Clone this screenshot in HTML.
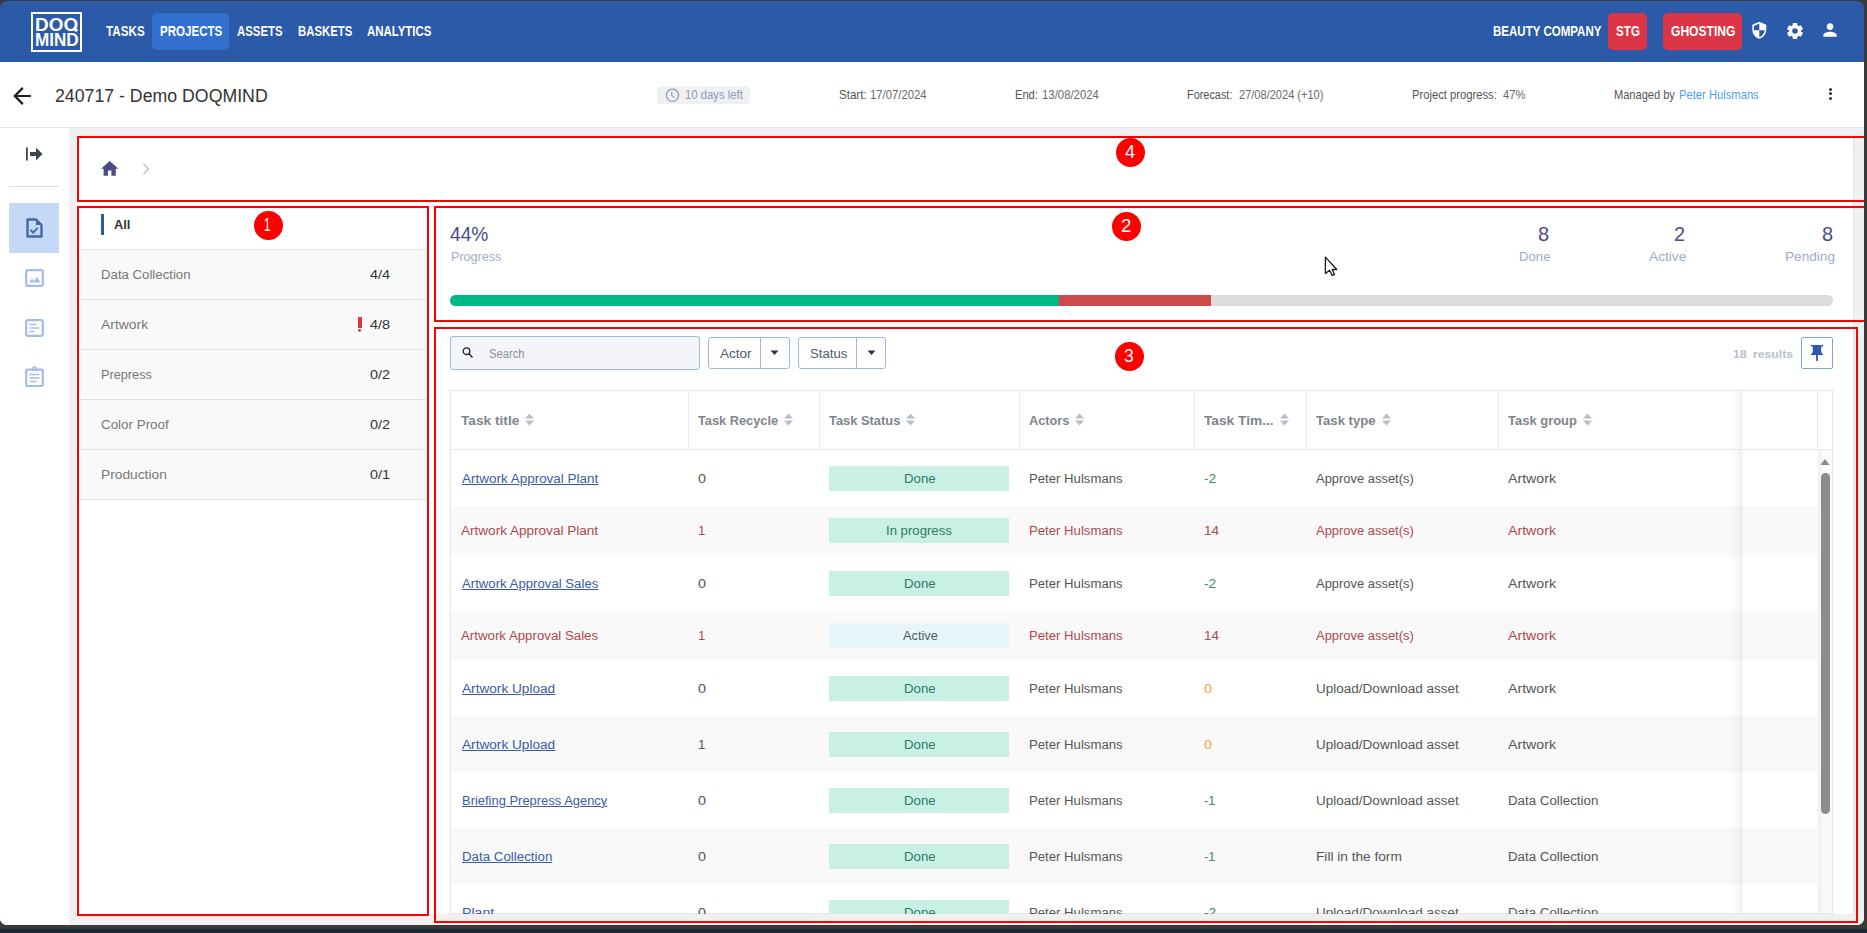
<!DOCTYPE html><html><head><meta charset='utf-8'><style>html,body{margin:0;padding:0;}
body{width:1867px;height:933px;background:#3a3a3a;position:relative;overflow:hidden;font-family:"Liberation Sans",sans-serif;}
#navy{position:absolute;left:0;top:929px;width:1867px;height:4px;background:#1b2a38;}
#win{position:absolute;left:0;top:1px;width:1864px;height:924px;border-radius:7px;overflow:hidden;}
#c{position:absolute;left:0;top:-1px;width:1864px;height:925px;}
.tx{position:absolute;white-space:nowrap;transform-origin:0 0;}
.bl{display:inline-block;width:0;height:0;vertical-align:baseline}#t0{transform:scaleX(1.0014)}#t1{transform:scaleX(0.9816)}#t2{transform:scaleX(0.8283)}#t3{transform:scaleX(0.8189)}#t4{transform:scaleX(0.8088)}#t5{transform:scaleX(0.8048)}#t6{transform:scaleX(0.8116)}#t7{transform:scaleX(0.8018)}#t8{transform:scaleX(0.8098)}#t9{transform:scaleX(0.8405)}#t10{transform:scaleX(0.9379)}#t11{transform:scaleX(0.9160)}#t12{transform:scaleX(0.9468)}#t13{transform:scaleX(0.9270)}#t14{transform:scaleX(0.9128)}#t15{transform:scaleX(0.9319)}#t16{transform:scaleX(0.8928)}#t17{transform:scaleX(0.9049)}#t18{transform:scaleX(0.9195)}#t19{transform:scaleX(0.9257)}#t20{transform:scaleX(0.9055)}#t21{transform:scaleX(0.9183)}#t22{transform:scaleX(0.9520)}#t23{transform:scaleX(0.9987)}#t24{transform:scaleX(1.0942)}#t25{transform:scaleX(1.0516)}#t26{transform:scaleX(1.0942)}#t27{transform:scaleX(0.9625)}#t28{transform:scaleX(1.0942)}#t29{transform:scaleX(1.0129)}#t30{transform:scaleX(1.0942)}#t31{transform:scaleX(1.0414)}#t32{transform:scaleX(1.0942)}#t33{transform:scaleX(0.9547)}#t34{transform:scaleX(0.9414)}#t35{transform:scaleX(0.9955)}#t36{transform:scaleX(0.9875)}#t37{transform:scaleX(0.9955)}#t38{transform:scaleX(1.0260)}#t39{transform:scaleX(0.9955)}#t40{transform:scaleX(1.0205)}#t41{transform:scaleX(0.8950)}#t42{transform:scaleX(1.0353)}#t43{transform:scaleX(1.0062)}#t44{transform:scaleX(1.0561)}#t45{transform:scaleX(1.0508)}#t46{transform:scaleX(1.0132)}#t47{transform:scaleX(0.9466)}#t48{transform:scaleX(0.9529)}#t49{transform:scaleX(0.9425)}#t50{transform:scaleX(1.0137)}#t51{transform:scaleX(0.9722)}#t52{transform:scaleX(0.9597)}#t53{transform:scaleX(1.0303)}#t54{transform:scaleX(1.0998)}#t55{transform:scaleX(1.0142)}#t56{transform:scaleX(1.0060)}#t57{transform:scaleX(1.0573)}#t58{transform:scaleX(0.9894)}#t59{transform:scaleX(1.0830)}#t60{transform:scaleX(1.0364)}#t61{transform:scaleX(1.0037)}#t62{transform:scaleX(1.0057)}#t63{transform:scaleX(1.0060)}#t64{transform:scaleX(1.0317)}#t65{transform:scaleX(0.9894)}#t66{transform:scaleX(1.0830)}#t67{transform:scaleX(1.0082)}#t68{transform:scaleX(1.0998)}#t69{transform:scaleX(1.0142)}#t70{transform:scaleX(1.0060)}#t71{transform:scaleX(1.0573)}#t72{transform:scaleX(0.9894)}#t73{transform:scaleX(1.0830)}#t74{transform:scaleX(1.0141)}#t75{transform:scaleX(1.0037)}#t76{transform:scaleX(0.9771)}#t77{transform:scaleX(1.0060)}#t78{transform:scaleX(1.0317)}#t79{transform:scaleX(0.9894)}#t80{transform:scaleX(1.0830)}#t81{transform:scaleX(1.0425)}#t82{transform:scaleX(1.0998)}#t83{transform:scaleX(1.0142)}#t84{transform:scaleX(1.0060)}#t85{transform:scaleX(1.0998)}#t86{transform:scaleX(1.0338)}#t87{transform:scaleX(1.0830)}#t88{transform:scaleX(1.0425)}#t89{transform:scaleX(1.0037)}#t90{transform:scaleX(1.0142)}#t91{transform:scaleX(1.0060)}#t92{transform:scaleX(1.0998)}#t93{transform:scaleX(1.0338)}#t94{transform:scaleX(1.0830)}#t95{transform:scaleX(0.9895)}#t96{transform:scaleX(1.0998)}#t97{transform:scaleX(1.0142)}#t98{transform:scaleX(1.0060)}#t99{transform:scaleX(0.9714)}#t100{transform:scaleX(1.0338)}#t101{transform:scaleX(1.0183)}#t102{transform:scaleX(1.0183)}#t103{transform:scaleX(1.0998)}#t104{transform:scaleX(1.0142)}#t105{transform:scaleX(1.0060)}#t106{transform:scaleX(0.9714)}#t107{transform:scaleX(1.0448)}#t108{transform:scaleX(1.0183)}#t109{transform:scaleX(1.0837)}#t110{transform:scaleX(1.0998)}#t111{transform:scaleX(1.0142)}#t112{transform:scaleX(1.0060)}#t113{transform:scaleX(1.0573)}#t114{transform:scaleX(1.0338)}#t115{transform:scaleX(1.0183)}#t116{transform:scaleX(0.6641)}#t117{transform:scaleX(1.0661)}#t118{transform:scaleX(1.0042)}#t119{transform:scaleX(1.0455)}</style></head><body><div id='navy'></div><div id='win'><div id='c'><div style="position:absolute;left:0px;top:120px;width:1864px;height:805px;background:#f0f0f0;"></div>
<div style="position:absolute;left:0px;top:0px;width:1864px;height:62px;background:#2b5aa8;"></div>
<div style="position:absolute;left:31px;top:12px;width:51px;height:40px;border:2.3px solid #fff;box-sizing:border-box;"></div>
<div id="t0" class="tx" style="left:34.77px;top:16.11px;font-size:18.90px;line-height:18.90px;color:#fff;font-weight:700;">DOO</div>
<div style="position:absolute;left:72.5px;top:27.5px;width:4.5px;height:2.6px;background:#fff;transform:rotate(40deg);"></div>
<div id="t1" class="tx" style="left:34.85px;top:32.10px;font-size:17.44px;line-height:17.44px;color:#fff;font-weight:700;">MIND</div>
<div style="position:absolute;left:152px;top:13px;width:77px;height:37px;background:#336fce;border-radius:5px;"></div>
<div id="t2" class="tx" style="left:106.45px;top:24.11px;font-size:14.10px;line-height:14.10px;color:#fff;font-weight:700;">TASKS</div>
<div id="t3" class="tx" style="left:159.95px;top:24.11px;font-size:14.10px;line-height:14.10px;color:#fff;font-weight:700;">PROJECTS</div>
<div id="t4" class="tx" style="left:237.05px;top:24.11px;font-size:14.10px;line-height:14.10px;color:#fff;font-weight:700;">ASSETS</div>
<div id="t5" class="tx" style="left:297.95px;top:24.11px;font-size:14.10px;line-height:14.10px;color:#fff;font-weight:700;">BASKETS</div>
<div id="t6" class="tx" style="left:366.75px;top:24.11px;font-size:14.10px;line-height:14.10px;color:#fff;font-weight:700;">ANALYTICS</div>
<div id="t7" class="tx" style="left:1492.74px;top:24.31px;font-size:14.39px;line-height:14.39px;color:#fff;font-weight:700;">BEAUTY COMPANY</div>
<div style="position:absolute;left:1608px;top:13px;width:39px;height:37px;background:#dc3545;border-radius:5px;"></div>
<div id="t8" class="tx" style="left:1615.54px;top:24.31px;font-size:14.39px;line-height:14.39px;color:#fff;font-weight:700;">STG</div>
<div style="position:absolute;left:1663px;top:13px;width:79px;height:37px;background:#dc3545;border-radius:5px;"></div>
<div id="t9" class="tx" style="left:1670.64px;top:24.31px;font-size:14.39px;line-height:14.39px;color:#fff;font-weight:700;">GHOSTING</div>
<svg style="position:absolute;left:1750.2px;top:21.2px;" width="18.6" height="18.6" viewBox="0 0 24 24"><path fill="#fff" d="M12 1L3 5v6c0 5.55 3.84 10.74 9 12 5.16-1.26 9-6.45 9-12V5l-9-4zm0 10.99h7c-.53 4.12-3.28 7.79-7 8.94V12H5V6.3l7-3.11v8.8z"/></svg>
<svg style="position:absolute;left:1787px;top:22.5px;" width="16" height="16" viewBox="-8 -8 16 16"><g fill="#fff"><rect x="-2.3" y="-8" width="4.6" height="4" rx="0.8" transform="rotate(0)"/><rect x="-2.3" y="-8" width="4.6" height="4" rx="0.8" transform="rotate(60)"/><rect x="-2.3" y="-8" width="4.6" height="4" rx="0.8" transform="rotate(120)"/><rect x="-2.3" y="-8" width="4.6" height="4" rx="0.8" transform="rotate(180)"/><rect x="-2.3" y="-8" width="4.6" height="4" rx="0.8" transform="rotate(240)"/><rect x="-2.3" y="-8" width="4.6" height="4" rx="0.8" transform="rotate(300)"/><circle r="6.2"/></g><circle r="2.8" fill="#2b5aa8"/></svg>
<svg style="position:absolute;left:1820.3px;top:20.4px;" width="20.1" height="20.1" viewBox="0 0 24 24"><path fill="#fff" d="M12 12c2.21 0 4-1.79 4-4s-1.79-4-4-4-4 1.79-4 4 1.79 4 4 4zm0 2c-2.67 0-8 1.34-8 4v2h16v-2c0-2.66-5.33-4-8-4z"/></svg>
<div style="position:absolute;left:0px;top:62px;width:1864px;height:65px;background:#fff;"></div>
<div style="position:absolute;left:0px;top:127px;width:1864px;height:1px;background:#e3e3e3;"></div>
<svg style="position:absolute;left:12px;top:84px;" width="20" height="24" viewBox="3 2 18 20"><path fill="#222" d="M20 11H7.83l5.59-5.59L12 4l-8 8 8 8 1.41-1.41L7.83 13H20v-2z"/></svg>
<div id="t10" class="tx" style="left:54.87px;top:87.00px;font-size:18.90px;line-height:18.90px;color:#333;font-weight:400;">240717 - Demo DOQMIND</div>
<div style="position:absolute;left:657px;top:86px;width:93px;height:18px;background:#f1f1f3;border-radius:4px;"></div>
<svg style="position:absolute;left:665px;top:87.5px;" width="15" height="15" viewBox="0 0 15 15"><circle cx="7.5" cy="7.3" r="6.1" fill="none" stroke="#8d9bb3" stroke-width="1.3"/><path d="M6.7 3.8V7.5L9.4 9.6" fill="none" stroke="#8d9bb3" stroke-width="1.2"/></svg>
<div id="t11" class="tx" style="left:684.86px;top:89.01px;font-size:12.35px;line-height:12.35px;color:#8f9bb3;font-weight:400;">10 days left</div>
<div id="t12" class="tx" style="left:838.67px;top:89.01px;font-size:12.21px;line-height:12.21px;color:#555;font-weight:400;">Start:</div>
<div id="t13" class="tx" style="left:870.27px;top:89.01px;font-size:12.21px;line-height:12.21px;color:#6a6a6a;font-weight:400;">17/07/2024</div>
<div id="t14" class="tx" style="left:1015.27px;top:89.01px;font-size:12.21px;line-height:12.21px;color:#555;font-weight:400;">End:</div>
<div id="t15" class="tx" style="left:1041.87px;top:89.01px;font-size:12.21px;line-height:12.21px;color:#6a6a6a;font-weight:400;">13/08/2024</div>
<div id="t16" class="tx" style="left:1187.47px;top:89.01px;font-size:12.21px;line-height:12.21px;color:#555;font-weight:400;">Forecast:</div>
<div id="t17" class="tx" style="left:1238.87px;top:89.01px;font-size:12.21px;line-height:12.21px;color:#6a6a6a;font-weight:400;">27/08/2024 (+10)</div>
<div id="t18" class="tx" style="left:1412.27px;top:89.01px;font-size:12.21px;line-height:12.21px;color:#555;font-weight:400;">Project progress:</div>
<div id="t19" class="tx" style="left:1503.27px;top:89.01px;font-size:12.21px;line-height:12.21px;color:#6a6a6a;font-weight:400;">47%</div>
<div id="t20" class="tx" style="left:1614.27px;top:89.01px;font-size:12.21px;line-height:12.21px;color:#555;font-weight:400;">Managed by</div>
<div id="t21" class="tx" style="left:1679.37px;top:89.01px;font-size:12.21px;line-height:12.21px;color:#4aa0f5;font-weight:400;">Peter Hulsmans</div>
<div style="position:absolute;left:1828.6px;top:87.9px;width:3px;height:3px;background:#333;border-radius:50%;"></div>
<div style="position:absolute;left:1828.6px;top:92.4px;width:3px;height:3px;background:#333;border-radius:50%;"></div>
<div style="position:absolute;left:1828.6px;top:96.9px;width:3px;height:3px;background:#333;border-radius:50%;"></div>
<div style="position:absolute;left:0px;top:128px;width:69px;height:797px;background:#fff;"></div>
<svg style="position:absolute;left:25px;top:146px;" width="19" height="16" viewBox="0 0 19 16"><rect x="1" y="1.5" width="1.8" height="13" fill="#3d4654"/><path d="M5 6h6V1.5L17.5 8L11 14.5V10H5z" fill="#3d4654"/></svg>
<div style="position:absolute;left:9px;top:186px;width:50px;height:1px;background:#dedede;"></div>
<div style="position:absolute;left:9px;top:203px;width:50px;height:50px;background:#c5d9f4;"></div>
<svg style="position:absolute;left:25px;top:217px;" width="19" height="22" viewBox="0 0 19 22"><path d="M2.5 2.5h8.5l5.5 5.5v11.5h-14z" fill="none" stroke="#4767a6" stroke-width="2.4" stroke-linejoin="round"/><path d="M11 2.5v5.5h5.5z" fill="#4767a6"/><path d="M5.5 13l2.6 2.6 4.6-4.8" fill="none" stroke="#4767a6" stroke-width="1.8"/></svg>
<svg style="position:absolute;left:24px;top:268px;" width="21" height="20" viewBox="0 0 21 20"><rect x="2.2" y="2.2" width="16.6" height="15.6" rx="1.2" fill="none" stroke="#a5bce8" stroke-width="2.2"/><path d="M5 14.5l3-4 2 2.5 3-4 3.5 5.5z" fill="#a5bce8"/></svg>
<svg style="position:absolute;left:24px;top:318px;" width="21" height="20" viewBox="0 0 21 20"><rect x="2.2" y="2.2" width="16.6" height="15.6" rx="1.2" fill="none" stroke="#a5bce8" stroke-width="2.2"/><path d="M5.5 6.5h7M5.5 10h10M5.5 13.5h5" stroke="#a5bce8" stroke-width="1.6"/></svg>
<svg style="position:absolute;left:24px;top:366px;" width="21" height="22" viewBox="0 0 21 22"><rect x="2.2" y="3.6" width="16.6" height="16.4" rx="1.2" fill="none" stroke="#a5bce8" stroke-width="2.2"/><circle cx="10.5" cy="2.8" r="1.8" fill="none" stroke="#a5bce8" stroke-width="1.4"/><path d="M5.5 8.5h10M5.5 12h10M5.5 15.5h7" stroke="#a5bce8" stroke-width="1.6"/></svg>
<div style="position:absolute;left:76px;top:136px;width:1777px;height:778px;background:#fff;"></div>
<div style="position:absolute;left:1853px;top:136px;width:1px;height:778px;background:#dfe5ee;"></div>
<svg style="position:absolute;left:101.3px;top:161.4px;" width="17.4" height="14.8" viewBox="2 3 20 17"><path fill="#4b4b8c" d="M10 20v-6h4v6h5v-8h3L12 3 2 12h3v8z"/></svg>
<svg style="position:absolute;left:142px;top:163px;" width="9" height="12" viewBox="0 0 9 12"><path d="M1.5 1l5 5-5 5" fill="none" stroke="#c2c2c2" stroke-width="1.5"/></svg>
<div style="position:absolute;left:79px;top:249px;width:347px;height:251px;background:#f9f9fa;"></div>
<div style="position:absolute;left:79px;top:249px;width:347px;height:1px;background:#dfe3e8;"></div>
<div style="position:absolute;left:79px;top:299px;width:347px;height:1px;background:#dfe3e8;"></div>
<div style="position:absolute;left:79px;top:349px;width:347px;height:1px;background:#dfe3e8;"></div>
<div style="position:absolute;left:79px;top:399px;width:347px;height:1px;background:#dfe3e8;"></div>
<div style="position:absolute;left:79px;top:449px;width:347px;height:1px;background:#dfe3e8;"></div>
<div style="position:absolute;left:79px;top:499px;width:347px;height:1px;background:#dfe3e8;"></div>
<div style="position:absolute;left:101px;top:214px;width:3px;height:21px;background:#2b5aa8;"></div>
<div id="t22" class="tx" style="left:113.59px;top:218.01px;font-size:13.52px;line-height:13.52px;color:#333;font-weight:700;">All</div>
<div id="t23" class="tx" style="left:101.41px;top:267.91px;font-size:13.23px;line-height:13.23px;color:#777;font-weight:400;">Data Collection</div>
<div id="t24" class="tx" style="left:369.81px;top:267.91px;font-size:13.23px;line-height:13.23px;color:#333;font-weight:400;">4/4</div>
<div id="t25" class="tx" style="left:101.41px;top:317.91px;font-size:13.23px;line-height:13.23px;color:#777;font-weight:400;">Artwork</div>
<div id="t26" class="tx" style="left:369.81px;top:317.91px;font-size:13.23px;line-height:13.23px;color:#333;font-weight:400;">4/8</div>
<div id="t27" class="tx" style="left:101.41px;top:367.91px;font-size:13.23px;line-height:13.23px;color:#777;font-weight:400;">Prepress</div>
<div id="t28" class="tx" style="left:369.81px;top:367.91px;font-size:13.23px;line-height:13.23px;color:#333;font-weight:400;">0/2</div>
<div id="t29" class="tx" style="left:101.41px;top:417.91px;font-size:13.23px;line-height:13.23px;color:#777;font-weight:400;">Color Proof</div>
<div id="t30" class="tx" style="left:369.81px;top:417.91px;font-size:13.23px;line-height:13.23px;color:#333;font-weight:400;">0/2</div>
<div id="t31" class="tx" style="left:101.41px;top:467.91px;font-size:13.23px;line-height:13.23px;color:#777;font-weight:400;">Production</div>
<div id="t32" class="tx" style="left:369.81px;top:467.91px;font-size:13.23px;line-height:13.23px;color:#333;font-weight:400;">0/1</div>
<div style="position:absolute;left:358.1px;top:317px;width:3.8px;height:11px;background:#dc3545;"></div>
<div style="position:absolute;left:358.3px;top:329.1px;width:3.2px;height:3px;background:#dc3545;border-radius:50%;"></div>
<div id="t33" class="tx" style="left:449.70px;top:224.11px;font-size:20.06px;line-height:20.06px;color:#4a4b8a;font-weight:400;">44%</div>
<div id="t34" class="tx" style="left:450.60px;top:250.11px;font-size:13.37px;line-height:13.37px;color:#a3abc2;font-weight:400;">Progress</div>
<div id="t35" class="tx" style="left:1538.20px;top:224.11px;font-size:20.06px;line-height:20.06px;color:#4a4b8a;font-weight:400;">8</div>
<div id="t36" class="tx" style="left:1518.60px;top:250.11px;font-size:13.37px;line-height:13.37px;color:#a3abc2;font-weight:400;">Done</div>
<div id="t37" class="tx" style="left:1674.40px;top:224.11px;font-size:20.06px;line-height:20.06px;color:#4a4b8a;font-weight:400;">2</div>
<div id="t38" class="tx" style="left:1648.80px;top:250.11px;font-size:13.37px;line-height:13.37px;color:#a3abc2;font-weight:400;">Active</div>
<div id="t39" class="tx" style="left:1821.90px;top:224.11px;font-size:20.06px;line-height:20.06px;color:#4a4b8a;font-weight:400;">8</div>
<div id="t40" class="tx" style="left:1784.80px;top:250.11px;font-size:13.37px;line-height:13.37px;color:#a3abc2;font-weight:400;">Pending</div>
<div style="position:absolute;left:450px;top:295px;width:1383px;height:11px;background:#dcdcdc;border-radius:5.5px;overflow:hidden;"></div>
<div style="position:absolute;left:450px;top:295px;width:609px;height:11px;background:#00b886;border-radius:5.5px 0 0 5.5px;"></div>
<div style="position:absolute;left:1059px;top:295px;width:152px;height:11px;background:#cc4a4a;"></div>
<svg style="position:absolute;left:1324px;top:256px;" width="14" height="21" viewBox="0 0 14 21"><path d="M1.4 1.1V17.6L5.5 14.3L8.1 19.4L10.4 18.6L8.2 13.5H12.8Z" fill="#fff" stroke="#1a1a22" stroke-width="1.3" stroke-linejoin="round"/></svg>
<div style="position:absolute;left:450px;top:336px;width:249.5px;height:33.5px;background:#f3f5f9;border:1.2px solid #9bb8e8;border-radius:3px;box-sizing:border-box;"></div>
<svg style="position:absolute;left:461px;top:346px;" width="14" height="14" viewBox="0 0 14 14"><circle cx="5.5" cy="5.2" r="3.3" fill="none" stroke="#1c1c28" stroke-width="1.3"/><path d="M7.9 7.7l3.6 3.7" stroke="#1c1c28" stroke-width="1.4"/></svg>
<div id="t41" class="tx" style="left:489.45px;top:348.01px;font-size:12.50px;line-height:12.50px;color:#8a8f99;font-weight:400;">Search</div>
<div style="position:absolute;left:708px;top:337px;width:81.5px;height:31.5px;border:1.2px solid #9bb8e8;border-radius:3px;box-sizing:border-box;"></div>
<div style="position:absolute;left:760px;top:337px;width:1.2px;height:31.5px;background:#9bb8e8;"></div>
<div id="t42" class="tx" style="left:719.82px;top:347.02px;font-size:13.08px;line-height:13.08px;color:#4b5a72;font-weight:400;">Actor</div>
<svg style="position:absolute;left:770px;top:350px;" width="9" height="6" viewBox="0 0 9 6"><path d="M0.5 0.5h8L4.5 5z" fill="#333"/></svg>
<div style="position:absolute;left:798px;top:337px;width:87.5px;height:31.5px;border:1.2px solid #9bb8e8;border-radius:3px;box-sizing:border-box;"></div>
<div style="position:absolute;left:856px;top:337px;width:1.2px;height:31.5px;background:#9bb8e8;"></div>
<div id="t43" class="tx" style="left:809.82px;top:347.02px;font-size:13.08px;line-height:13.08px;color:#4b5a72;font-weight:400;">Status</div>
<svg style="position:absolute;left:866.5px;top:350px;" width="9" height="6" viewBox="0 0 9 6"><path d="M0.5 0.5h8L4.5 5z" fill="#333"/></svg>
<div id="t44" class="tx" style="left:1733.40px;top:348.01px;font-size:11.63px;line-height:11.63px;color:#b9bfca;font-weight:700;">18</div>
<div id="t45" class="tx" style="left:1753.30px;top:348.01px;font-size:11.63px;line-height:11.63px;color:#b9bfca;font-weight:700;">results</div>
<div style="position:absolute;left:1801px;top:337px;width:32px;height:32px;border:1.5px solid #7ea3e3;border-radius:2px;box-sizing:border-box;"></div>
<svg style="position:absolute;left:1810px;top:344px;" width="14" height="18" viewBox="0 0 14 18"><path d="M1 1H13V2.4H11.2V8.3L13 10.2V10.9H1V10.2L2.8 8.3V2.4H1Z" fill="#2b5aa8"/><rect x="6.1" y="10.9" width="1.8" height="6" fill="#2b5aa8"/></svg>
<div style="position:absolute;left:450px;top:390px;width:1383px;height:524px;border:1px solid #e4e7f0;box-sizing:border-box;background:#fff;"></div>
<div style="position:absolute;left:451px;top:505.8px;width:1367px;height:48.9px;background:#f9f9f9;"></div>
<div style="position:absolute;left:451px;top:610.9px;width:1367px;height:48.9px;background:#f9f9f9;"></div>
<div style="position:absolute;left:451px;top:715.8px;width:1367px;height:56.0px;background:#f9f9f9;"></div>
<div style="position:absolute;left:451px;top:827.9px;width:1367px;height:56.1px;background:#f9f9f9;"></div>
<div style="position:absolute;left:450px;top:449px;width:1383px;height:1px;background:#e4e7f0;"></div>
<div style="position:absolute;left:688px;top:390px;width:1px;height:59px;background:#e9ebf2;"></div>
<div style="position:absolute;left:819px;top:390px;width:1px;height:59px;background:#e9ebf2;"></div>
<div style="position:absolute;left:1019px;top:390px;width:1px;height:59px;background:#e9ebf2;"></div>
<div style="position:absolute;left:1194px;top:390px;width:1px;height:59px;background:#e9ebf2;"></div>
<div style="position:absolute;left:1306px;top:390px;width:1px;height:59px;background:#e9ebf2;"></div>
<div style="position:absolute;left:1498px;top:390px;width:1px;height:59px;background:#e9ebf2;"></div>
<div style="position:absolute;left:1742px;top:391px;width:76px;height:522px;background:#fff;"></div>
<div style="position:absolute;left:1742px;top:505.8px;width:76px;height:48.9px;background:#f9f9f9;"></div>
<div style="position:absolute;left:1742px;top:610.9px;width:76px;height:48.9px;background:#f9f9f9;"></div>
<div style="position:absolute;left:1742px;top:715.8px;width:76px;height:56.0px;background:#f9f9f9;"></div>
<div style="position:absolute;left:1742px;top:827.9px;width:76px;height:56.1px;background:#f9f9f9;"></div>
<div style="position:absolute;left:1730px;top:391px;width:12px;height:522px;background:linear-gradient(90deg,rgba(0,0,0,0),rgba(0,0,0,0.05));"></div>
<div style="position:absolute;left:1742px;top:390px;width:1px;height:524px;background:rgba(0,0,0,0.03);"></div>
<div style="position:absolute;left:1817px;top:390px;width:1px;height:59px;background:#e9ebf2;"></div>
<div style="position:absolute;left:450px;top:449px;width:1383px;height:1px;background:#e4e7f0;"></div>
<div style="position:absolute;left:1818px;top:450px;width:14px;height:463px;background:linear-gradient(90deg,#efefef,#f9f9f9 40%,#fbfbfb);"></div>
<svg style="position:absolute;left:1820.2px;top:457.5px;" width="10" height="8" viewBox="0 0 10 8"><path d="M0.3 7L5 1L9.7 7z" fill="#8a8a8a"/></svg>
<div style="position:absolute;left:1821px;top:473px;width:8.7px;height:341px;background:#8c8c8c;border-radius:4.5px;"></div>
<div id="t46" class="tx" style="left:460.79px;top:413.92px;font-size:13.52px;line-height:13.52px;color:#80858d;font-weight:700;">Task title</div>
<svg style="position:absolute;left:524px;top:411.5px;" width="11" height="15" viewBox="0 0 11 15"><path d="M1 6.5L5.5 1.5L10 6.5z M1 8.5L5.5 13.5L10 8.5z" fill="#b9bdc6"/></svg>
<div id="t47" class="tx" style="left:697.99px;top:413.92px;font-size:13.52px;line-height:13.52px;color:#80858d;font-weight:700;">Task Recycle</div>
<svg style="position:absolute;left:783px;top:411.5px;" width="11" height="15" viewBox="0 0 11 15"><path d="M1 6.5L5.5 1.5L10 6.5z M1 8.5L5.5 13.5L10 8.5z" fill="#b9bdc6"/></svg>
<div id="t48" class="tx" style="left:829.29px;top:413.92px;font-size:13.52px;line-height:13.52px;color:#80858d;font-weight:700;">Task Status</div>
<svg style="position:absolute;left:905px;top:411.5px;" width="11" height="15" viewBox="0 0 11 15"><path d="M1 6.5L5.5 1.5L10 6.5z M1 8.5L5.5 13.5L10 8.5z" fill="#b9bdc6"/></svg>
<div id="t49" class="tx" style="left:1028.79px;top:413.92px;font-size:13.52px;line-height:13.52px;color:#80858d;font-weight:700;">Actors</div>
<svg style="position:absolute;left:1074px;top:411.5px;" width="11" height="15" viewBox="0 0 11 15"><path d="M1 6.5L5.5 1.5L10 6.5z M1 8.5L5.5 13.5L10 8.5z" fill="#b9bdc6"/></svg>
<div id="t50" class="tx" style="left:1204.29px;top:413.92px;font-size:13.52px;line-height:13.52px;color:#80858d;font-weight:700;">Task Tim...</div>
<svg style="position:absolute;left:1278.7px;top:411.5px;" width="11" height="15" viewBox="0 0 11 15"><path d="M1 6.5L5.5 1.5L10 6.5z M1 8.5L5.5 13.5L10 8.5z" fill="#b9bdc6"/></svg>
<div id="t51" class="tx" style="left:1316.49px;top:413.92px;font-size:13.52px;line-height:13.52px;color:#80858d;font-weight:700;">Task type</div>
<svg style="position:absolute;left:1381px;top:411.5px;" width="11" height="15" viewBox="0 0 11 15"><path d="M1 6.5L5.5 1.5L10 6.5z M1 8.5L5.5 13.5L10 8.5z" fill="#b9bdc6"/></svg>
<div id="t52" class="tx" style="left:1507.79px;top:413.92px;font-size:13.52px;line-height:13.52px;color:#80858d;font-weight:700;">Task group</div>
<svg style="position:absolute;left:1582px;top:411.5px;" width="11" height="15" viewBox="0 0 11 15"><path d="M1 6.5L5.5 1.5L10 6.5z M1 8.5L5.5 13.5L10 8.5z" fill="#b9bdc6"/></svg>
<div id="t53" class="tx" style="left:462.12px;top:472.02px;font-size:13.08px;line-height:13.08px;color:#3a5ca8;font-weight:400;text-decoration:underline;text-underline-offset:1px;">Artwork Approval Plant</div>
<div id="t54" class="tx" style="left:697.82px;top:472.02px;font-size:13.08px;line-height:13.08px;color:#555;font-weight:400;">0</div>
<div style="position:absolute;left:829px;top:466.2px;width:180px;height:25px;background:#c8f0e4;"></div>
<div id="t55" class="tx" style="left:903.62px;top:472.02px;font-size:13.08px;line-height:13.08px;color:#2e7a63;font-weight:400;">Done</div>
<div id="t56" class="tx" style="left:1028.82px;top:472.02px;font-size:13.08px;line-height:13.08px;color:#555;font-weight:400;">Peter Hulsmans</div>
<div id="t57" class="tx" style="left:1203.82px;top:472.02px;font-size:13.08px;line-height:13.08px;color:#3d8a5e;font-weight:400;">-2</div>
<div id="t58" class="tx" style="left:1315.62px;top:472.02px;font-size:13.08px;line-height:13.08px;color:#555;font-weight:400;">Approve asset(s)</div>
<div id="t59" class="tx" style="left:1507.82px;top:472.02px;font-size:13.08px;line-height:13.08px;color:#555;font-weight:400;">Artwork</div>
<div id="t60" class="tx" style="left:461.22px;top:524.31px;font-size:13.08px;line-height:13.08px;color:#ae4a4c;font-weight:400;">Artwork Approval Plant</div>
<div id="t61" class="tx" style="left:697.82px;top:524.31px;font-size:13.08px;line-height:13.08px;color:#ae4a4c;font-weight:400;">1</div>
<div style="position:absolute;left:829px;top:518.0px;width:180px;height:25px;background:#c8f0e4;"></div>
<div id="t62" class="tx" style="left:886.32px;top:524.31px;font-size:13.08px;line-height:13.08px;color:#2e7a63;font-weight:400;">In progress</div>
<div id="t63" class="tx" style="left:1028.82px;top:524.31px;font-size:13.08px;line-height:13.08px;color:#ae4a4c;font-weight:400;">Peter Hulsmans</div>
<div id="t64" class="tx" style="left:1203.82px;top:524.31px;font-size:13.08px;line-height:13.08px;color:#ae4a4c;font-weight:400;">14</div>
<div id="t65" class="tx" style="left:1315.62px;top:524.31px;font-size:13.08px;line-height:13.08px;color:#ae4a4c;font-weight:400;">Approve asset(s)</div>
<div id="t66" class="tx" style="left:1507.82px;top:524.31px;font-size:13.08px;line-height:13.08px;color:#ae4a4c;font-weight:400;">Artwork</div>
<div id="t67" class="tx" style="left:462.12px;top:576.71px;font-size:13.08px;line-height:13.08px;color:#3a5ca8;font-weight:400;text-decoration:underline;text-underline-offset:1px;">Artwork Approval Sales</div>
<div id="t68" class="tx" style="left:697.82px;top:576.71px;font-size:13.08px;line-height:13.08px;color:#555;font-weight:400;">0</div>
<div style="position:absolute;left:829px;top:570.9px;width:180px;height:25px;background:#c8f0e4;"></div>
<div id="t69" class="tx" style="left:903.62px;top:576.71px;font-size:13.08px;line-height:13.08px;color:#2e7a63;font-weight:400;">Done</div>
<div id="t70" class="tx" style="left:1028.82px;top:576.71px;font-size:13.08px;line-height:13.08px;color:#555;font-weight:400;">Peter Hulsmans</div>
<div id="t71" class="tx" style="left:1203.82px;top:576.71px;font-size:13.08px;line-height:13.08px;color:#3d8a5e;font-weight:400;">-2</div>
<div id="t72" class="tx" style="left:1315.62px;top:576.71px;font-size:13.08px;line-height:13.08px;color:#555;font-weight:400;">Approve asset(s)</div>
<div id="t73" class="tx" style="left:1507.82px;top:576.71px;font-size:13.08px;line-height:13.08px;color:#555;font-weight:400;">Artwork</div>
<div id="t74" class="tx" style="left:461.22px;top:629.41px;font-size:13.08px;line-height:13.08px;color:#ae4a4c;font-weight:400;">Artwork Approval Sales</div>
<div id="t75" class="tx" style="left:697.82px;top:629.41px;font-size:13.08px;line-height:13.08px;color:#ae4a4c;font-weight:400;">1</div>
<div style="position:absolute;left:829px;top:623.1px;width:180px;height:25px;background:#e8f6fb;"></div>
<div id="t76" class="tx" style="left:902.82px;top:629.41px;font-size:13.08px;line-height:13.08px;color:#4d5b6b;font-weight:400;">Active</div>
<div id="t77" class="tx" style="left:1028.82px;top:629.41px;font-size:13.08px;line-height:13.08px;color:#ae4a4c;font-weight:400;">Peter Hulsmans</div>
<div id="t78" class="tx" style="left:1203.82px;top:629.41px;font-size:13.08px;line-height:13.08px;color:#ae4a4c;font-weight:400;">14</div>
<div id="t79" class="tx" style="left:1315.62px;top:629.41px;font-size:13.08px;line-height:13.08px;color:#ae4a4c;font-weight:400;">Approve asset(s)</div>
<div id="t80" class="tx" style="left:1507.82px;top:629.41px;font-size:13.08px;line-height:13.08px;color:#ae4a4c;font-weight:400;">Artwork</div>
<div id="t81" class="tx" style="left:462.12px;top:681.81px;font-size:13.08px;line-height:13.08px;color:#3a5ca8;font-weight:400;text-decoration:underline;text-underline-offset:1px;">Artwork Upload</div>
<div id="t82" class="tx" style="left:697.82px;top:681.81px;font-size:13.08px;line-height:13.08px;color:#555;font-weight:400;">0</div>
<div style="position:absolute;left:829px;top:676.0px;width:180px;height:25px;background:#c8f0e4;"></div>
<div id="t83" class="tx" style="left:903.62px;top:681.81px;font-size:13.08px;line-height:13.08px;color:#2e7a63;font-weight:400;">Done</div>
<div id="t84" class="tx" style="left:1028.82px;top:681.81px;font-size:13.08px;line-height:13.08px;color:#555;font-weight:400;">Peter Hulsmans</div>
<div id="t85" class="tx" style="left:1203.82px;top:681.81px;font-size:13.08px;line-height:13.08px;color:#f0a43a;font-weight:400;">0</div>
<div id="t86" class="tx" style="left:1315.62px;top:681.81px;font-size:13.08px;line-height:13.08px;color:#555;font-weight:400;">Upload/Download asset</div>
<div id="t87" class="tx" style="left:1507.82px;top:681.81px;font-size:13.08px;line-height:13.08px;color:#555;font-weight:400;">Artwork</div>
<div id="t88" class="tx" style="left:462.12px;top:737.81px;font-size:13.08px;line-height:13.08px;color:#3a5ca8;font-weight:400;text-decoration:underline;text-underline-offset:1px;">Artwork Upload</div>
<div id="t89" class="tx" style="left:697.82px;top:737.81px;font-size:13.08px;line-height:13.08px;color:#555;font-weight:400;">1</div>
<div style="position:absolute;left:829px;top:732.0px;width:180px;height:25px;background:#c8f0e4;"></div>
<div id="t90" class="tx" style="left:903.62px;top:737.81px;font-size:13.08px;line-height:13.08px;color:#2e7a63;font-weight:400;">Done</div>
<div id="t91" class="tx" style="left:1028.82px;top:737.81px;font-size:13.08px;line-height:13.08px;color:#555;font-weight:400;">Peter Hulsmans</div>
<div id="t92" class="tx" style="left:1203.82px;top:737.81px;font-size:13.08px;line-height:13.08px;color:#f0a43a;font-weight:400;">0</div>
<div id="t93" class="tx" style="left:1315.62px;top:737.81px;font-size:13.08px;line-height:13.08px;color:#555;font-weight:400;">Upload/Download asset</div>
<div id="t94" class="tx" style="left:1507.82px;top:737.81px;font-size:13.08px;line-height:13.08px;color:#555;font-weight:400;">Artwork</div>
<div id="t95" class="tx" style="left:462.12px;top:793.81px;font-size:13.08px;line-height:13.08px;color:#3a5ca8;font-weight:400;text-decoration:underline;text-underline-offset:1px;">Briefing Prepress Agency</div>
<div id="t96" class="tx" style="left:697.82px;top:793.81px;font-size:13.08px;line-height:13.08px;color:#555;font-weight:400;">0</div>
<div style="position:absolute;left:829px;top:788.0px;width:180px;height:25px;background:#c8f0e4;"></div>
<div id="t97" class="tx" style="left:903.62px;top:793.81px;font-size:13.08px;line-height:13.08px;color:#2e7a63;font-weight:400;">Done</div>
<div id="t98" class="tx" style="left:1028.82px;top:793.81px;font-size:13.08px;line-height:13.08px;color:#555;font-weight:400;">Peter Hulsmans</div>
<div id="t99" class="tx" style="left:1203.82px;top:793.81px;font-size:13.08px;line-height:13.08px;color:#3d8a5e;font-weight:400;">-1</div>
<div id="t100" class="tx" style="left:1315.62px;top:793.81px;font-size:13.08px;line-height:13.08px;color:#555;font-weight:400;">Upload/Download asset</div>
<div id="t101" class="tx" style="left:1507.82px;top:793.81px;font-size:13.08px;line-height:13.08px;color:#555;font-weight:400;">Data Collection</div>
<div id="t102" class="tx" style="left:462.12px;top:849.91px;font-size:13.08px;line-height:13.08px;color:#3a5ca8;font-weight:400;text-decoration:underline;text-underline-offset:1px;">Data Collection</div>
<div id="t103" class="tx" style="left:697.82px;top:849.91px;font-size:13.08px;line-height:13.08px;color:#555;font-weight:400;">0</div>
<div style="position:absolute;left:829px;top:844.1px;width:180px;height:25px;background:#c8f0e4;"></div>
<div id="t104" class="tx" style="left:903.62px;top:849.91px;font-size:13.08px;line-height:13.08px;color:#2e7a63;font-weight:400;">Done</div>
<div id="t105" class="tx" style="left:1028.82px;top:849.91px;font-size:13.08px;line-height:13.08px;color:#555;font-weight:400;">Peter Hulsmans</div>
<div id="t106" class="tx" style="left:1203.82px;top:849.91px;font-size:13.08px;line-height:13.08px;color:#3d8a5e;font-weight:400;">-1</div>
<div id="t107" class="tx" style="left:1315.62px;top:849.91px;font-size:13.08px;line-height:13.08px;color:#555;font-weight:400;">Fill in the form</div>
<div id="t108" class="tx" style="left:1507.82px;top:849.91px;font-size:13.08px;line-height:13.08px;color:#555;font-weight:400;">Data Collection</div>
<div id="t109" class="tx" style="left:462.12px;top:906.02px;font-size:13.08px;line-height:13.08px;color:#3a5ca8;font-weight:400;text-decoration:underline;text-underline-offset:1px;">Plant</div>
<div id="t110" class="tx" style="left:697.82px;top:906.02px;font-size:13.08px;line-height:13.08px;color:#555;font-weight:400;">0</div>
<div style="position:absolute;left:829px;top:900.2px;width:180px;height:25px;background:#c8f0e4;"></div>
<div id="t111" class="tx" style="left:903.62px;top:906.02px;font-size:13.08px;line-height:13.08px;color:#2e7a63;font-weight:400;">Done</div>
<div id="t112" class="tx" style="left:1028.82px;top:906.02px;font-size:13.08px;line-height:13.08px;color:#555;font-weight:400;">Peter Hulsmans</div>
<div id="t113" class="tx" style="left:1203.82px;top:906.02px;font-size:13.08px;line-height:13.08px;color:#3d8a5e;font-weight:400;">-2</div>
<div id="t114" class="tx" style="left:1315.62px;top:906.02px;font-size:13.08px;line-height:13.08px;color:#555;font-weight:400;">Upload/Download asset</div>
<div id="t115" class="tx" style="left:1507.82px;top:906.02px;font-size:13.08px;line-height:13.08px;color:#555;font-weight:400;">Data Collection</div>
<div style="position:absolute;left:69px;top:914px;width:1795px;height:11px;background:#f0f0f0;"></div>
<div style="position:absolute;left:77px;top:136px;width:1823px;height:66px;border:2px solid #ff0000;box-sizing:border-box;"></div>
<div style="position:absolute;left:77px;top:206px;width:352px;height:710px;border:2px solid #ff0000;box-sizing:border-box;"></div>
<div style="position:absolute;left:434px;top:206px;width:1466px;height:116px;border:2px solid #ff0000;box-sizing:border-box;"></div>
<div style="position:absolute;left:434px;top:327px;width:1424px;height:596px;border:2px solid #ff0000;box-sizing:border-box;"></div>
<div style="position:absolute;left:253.7px;top:210.70000000000002px;width:29.4px;height:29.4px;border-radius:50%;background:#ff0000;"></div>
<div id="t116" class="tx" style="left:264.25px;top:217.21px;font-size:17.44px;line-height:17.44px;color:#fff;font-weight:400;">1</div>
<div style="position:absolute;left:1111.6px;top:211.8px;width:29.4px;height:29.4px;border-radius:50%;background:#ff0000;"></div>
<div id="t117" class="tx" style="left:1121.45px;top:218.32px;font-size:17.44px;line-height:17.44px;color:#fff;font-weight:400;">2</div>
<div style="position:absolute;left:1114.85px;top:341.6px;width:29.4px;height:29.4px;border-radius:50%;background:#ff0000;"></div>
<div id="t118" class="tx" style="left:1124.45px;top:348.10px;font-size:17.44px;line-height:17.44px;color:#fff;font-weight:400;">3</div>
<div style="position:absolute;left:1115.8px;top:137.8px;width:29.4px;height:29.4px;border-radius:50%;background:#ff0000;"></div>
<div id="t119" class="tx" style="left:1125.25px;top:144.32px;font-size:17.44px;line-height:17.44px;color:#fff;font-weight:400;">4</div></div></div></body></html>
